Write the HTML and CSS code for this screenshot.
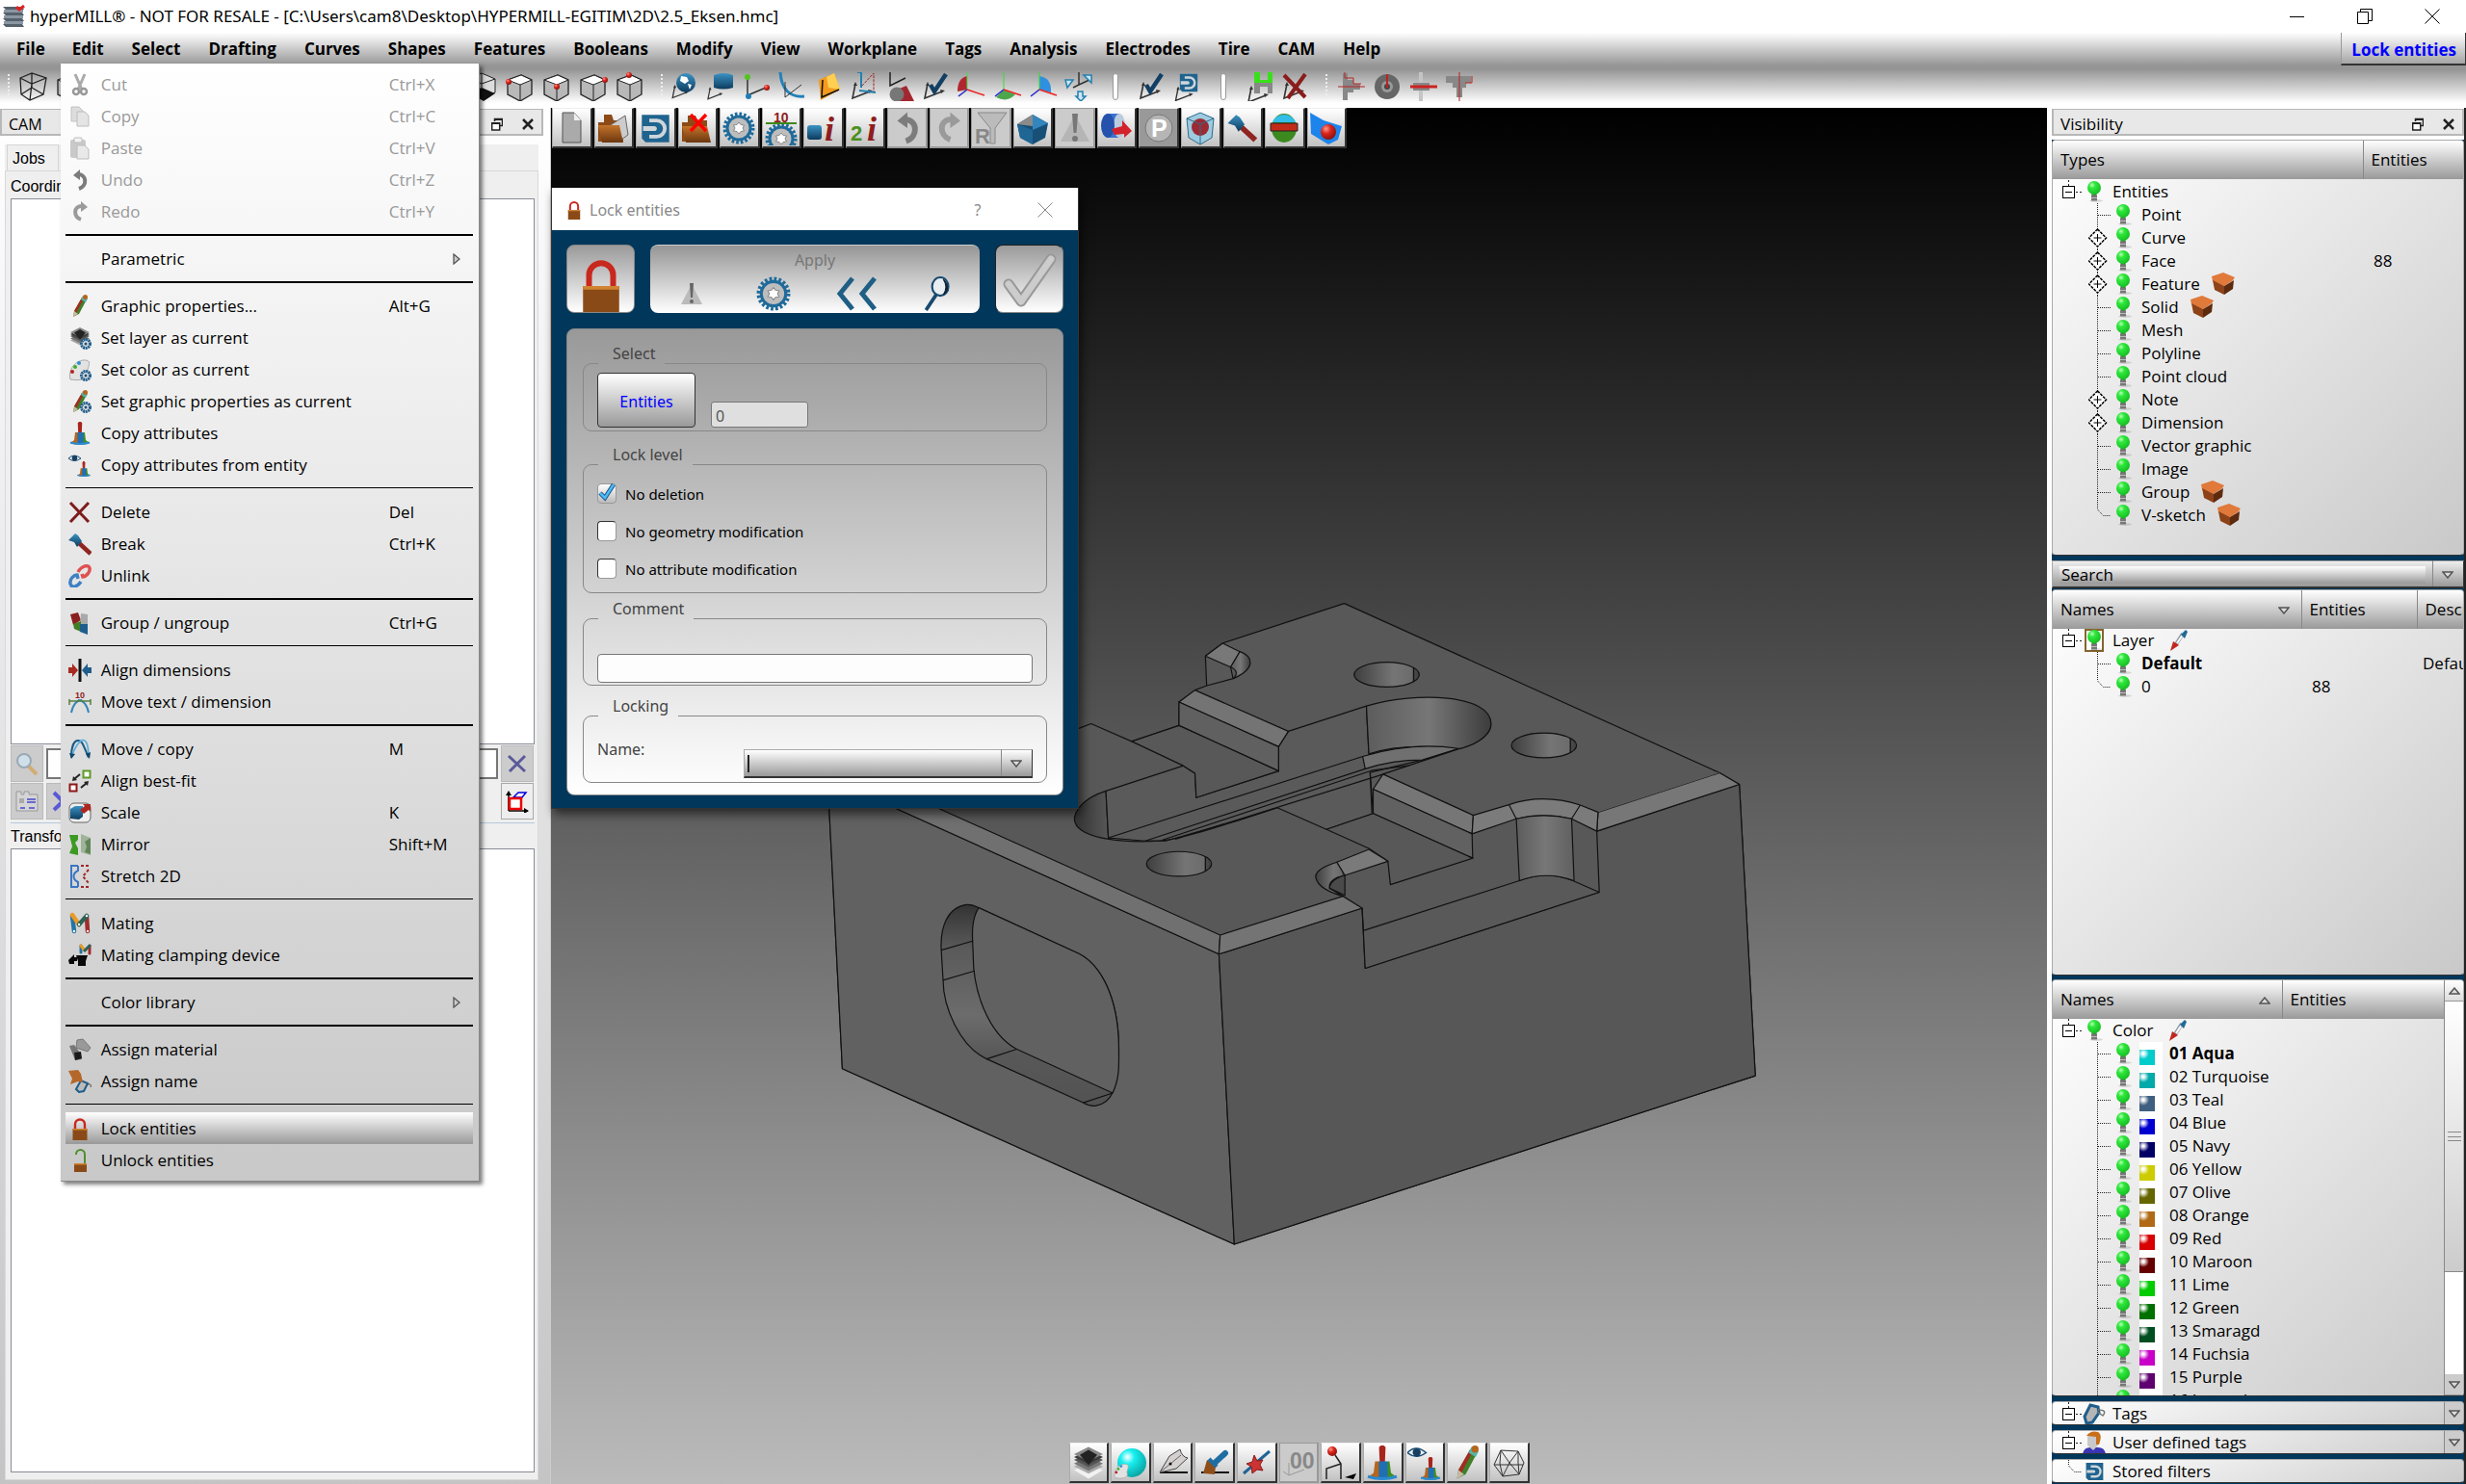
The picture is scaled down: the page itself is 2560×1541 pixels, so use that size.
FILE: index.html
```html
<!DOCTYPE html>
<html lang="en">
<head>
<meta charset="utf-8">
<title>hyperMILL</title>
<link rel="stylesheet" href="styles.css">
</head>
<body>
<svg class="defs" aria-hidden="true">
  <defs>
    <linearGradient id="g-blue" x1="0" y1="0" x2="0" y2="1"><stop offset="0" stop-color="#3a93c4"/><stop offset="1" stop-color="#0d3a5c"/></linearGradient>
    <linearGradient id="g-brown" x1="0" y1="0" x2="0" y2="1"><stop offset="0" stop-color="#c4742a"/><stop offset="1" stop-color="#6b370f"/></linearGradient>
    <linearGradient id="g-rgb" x1="0" y1="0" x2="1" y2="0"><stop offset="0.1" stop-color="#b5651d"/><stop offset="0.35" stop-color="#b5651d"/><stop offset="0.4" stop-color="#1f6fb2"/><stop offset="0.65" stop-color="#1f6fb2"/><stop offset="0.72" stop-color="#3f8f1f"/><stop offset="1" stop-color="#3f8f1f"/></linearGradient>
    <radialGradient id="g-bulb" cx="0.35" cy="0.3" r="0.8"><stop offset="0" stop-color="#b8ffb8"/><stop offset="0.3" stop-color="#2fe83c"/><stop offset="1" stop-color="#12b81f"/></radialGradient>
    <radialGradient id="g-red" cx="0.35" cy="0.3" r="0.8"><stop offset="0" stop-color="#ff9a8a"/><stop offset="0.4" stop-color="#d9251c"/><stop offset="1" stop-color="#7d0f0a"/></radialGradient>
    <radialGradient id="g-aqua" cx="0.35" cy="0.3" r="0.8"><stop offset="0" stop-color="#fff"/><stop offset="0.3" stop-color="#18f0f0"/><stop offset="1" stop-color="#089a9a"/></radialGradient>
    <linearGradient id="g-wall" x1="0" y1="0" x2="1" y2="0"><stop offset="0" stop-color="#5c5c5c"/><stop offset="0.5" stop-color="#777"/><stop offset="1" stop-color="#3c3c3c"/></linearGradient>
    <linearGradient id="g-fillet" x1="0" y1="0" x2="1" y2="0"><stop offset="0" stop-color="#5c5c5c"/><stop offset="0.5" stop-color="#777"/><stop offset="1" stop-color="#606060"/></linearGradient>
    <linearGradient id="g-slot" x1="0" y1="0" x2="1" y2="0"><stop offset="0" stop-color="#333"/><stop offset="0.45" stop-color="#5c5c5c"/><stop offset="1" stop-color="#666"/></linearGradient>
    <linearGradient id="g-hole" x1="0" y1="0" x2="1" y2="0"><stop offset="0" stop-color="#3e3e3e"/><stop offset="0.6" stop-color="#757575"/><stop offset="0.88" stop-color="#6c6c6c"/><stop offset="0.92" stop-color="#4a4a4a"/><stop offset="1" stop-color="#404040"/></linearGradient>
    <linearGradient id="g-pocket" x1="0" y1="0" x2="0" y2="1"><stop offset="0" stop-color="#333"/><stop offset="0.22" stop-color="#5a5a5a"/><stop offset="0.55" stop-color="#6c6c6c"/><stop offset="0.75" stop-color="#585858"/><stop offset="1" stop-color="#525252"/></linearGradient>
  </defs>

  <symbol id="lock" viewBox="0 0 24 24"><path d="M7 13V7.500a5 5 0 0 1 10 0V13" fill="none" stroke="#c8281e" stroke-width="2.400"/><rect x="4.500" y="12" width="15" height="12" fill="#8a4a17"/><path d="M4.500 12h15v1.500h-15z" fill="#d08432"/></symbol>
  <symbol id="unlock" viewBox="0 0 24 24"><path d="M8 6V5.500a4.500 4.500 0 0 1 9 0V15" fill="none" stroke="#4f8f2c" stroke-width="2"/><rect x="6" y="15" width="13" height="9" fill="#8a4a17"/><path d="M6 15h13v1.500H6z" fill="#d08432"/></symbol>
  <symbol id="cut" viewBox="0 0 24 24"><path d="M7 1l7 16M17 1l-7 16" stroke="#aaa" stroke-width="3"/><circle cx="8" cy="19" r="3" fill="none" stroke="#999" stroke-width="2.500"/><circle cx="16" cy="19" r="3" fill="none" stroke="#999" stroke-width="2.500"/></symbol>
  <symbol id="copy" viewBox="0 0 24 24"><path d="M3 2h8l4 4v11H3z" fill="#ddd" stroke="#c2c2c2"/><path d="M9 7h8l4 4v11H9z" fill="#e4e4e4" stroke="#bcbcbc"/></symbol>
  <symbol id="paste" viewBox="0 0 24 24"><rect x="2" y="3" width="16" height="19" rx="2" fill="#c9c9c9"/><rect x="6" y="1" width="8" height="5" rx="1" fill="#f2f2f2" stroke="#bbb"/><path d="M9 9h8l4 4v10H9z" fill="#e9e9e9" stroke="#bbb"/></symbol>
  <symbol id="undo" viewBox="0 0 24 24"><path d="M10 6c9 0 10 12 1 15" fill="none" stroke="#7c7c7c" stroke-width="4"/><path d="M12 1v11L5 7z" fill="#7c7c7c"/></symbol>
  <symbol id="redo" viewBox="0 0 24 24"><path d="M14 6c-9 0-9 11-1 14" fill="none" stroke="#9a9a9a" stroke-width="4"/><path d="M13 1v11l7-5z" fill="#9a9a9a"/></symbol>
  <symbol id="pencil" viewBox="0 0 24 24"><path d="M5 23l1-6L14 3l5 2-8 15z" fill="#3f7f2a"/><path d="M6 17L14 3l2 1-8 15z" fill="#a52a20"/><path d="M13 5l2-4 5 3-2 4z" fill="#53b5a8"/><circle cx="17.500" cy="2.500" r="2.500" fill="#b5651d"/><path d="M5 23l1-6 4 3z" fill="#c9b9a5"/></symbol>
  <symbol id="minigear" viewBox="0 0 24 24"><circle cx="18" cy="18" r="4.500" fill="#ddd" stroke="#1f5e8c" stroke-width="3" stroke-dasharray="2 .6"/><circle cx="18" cy="18" r="1.500" fill="#1f4d75"/></symbol>
  <symbol id="layers" viewBox="0 0 24 24"><path d="M12 13l10 4-10 6-10-6z" fill="#f2f2f2"/><path d="M12 9.500l10 5-10 5-10-5z" fill="#aaa"/><path d="M12 7.500l10 5-10 5-10-5z" fill="#777"/><path d="M12 5l10 5-10 5-10-5z" fill="#555"/><path d="M12 3l10 5-10 5L2 8z" fill="#3c3c3c"/><path d="M12 1l10 5-10 5L2 6z" fill="#888"/><path d="M12 3l6 3.500-6 7-6-7z" fill="#222"/></symbol>
  <symbol id="palette" viewBox="0 0 24 24"><path d="M2 22C-1 12 8 1 18 2c8 1 0 9 2 14s-6 8-18 6z" fill="#e2e2e2" stroke="#aaa"/><circle cx="7" cy="9" r="2" fill="#3faf2a"/><circle cx="11" cy="5" r="2" fill="#2f8fd0"/><circle cx="4" cy="14" r="2" fill="#b52020"/></symbol>
  <symbol id="brush" viewBox="0 0 24 24"><path d="M10.500 1.500q1.500-2 3 0l-.5 11h-2z" fill="#a8241c" stroke="#a8241c" stroke-width="1.500"/><path d="M7 11h10l1 8 4 3c-4 2-16 2-20 0l4-3z" fill="url(#g-rgb)"/><path d="M2 21.500q10 3 20 0" stroke="#2b8ad0" stroke-width="2" fill="none"/></symbol>
  <symbol id="eye" viewBox="0 0 24 24"><path d="M0 5q6-6 13 0-7 5-13 0z" fill="#e8f0f5" stroke="#1d4f75"/><circle cx="6.500" cy="4.800" r="2.800" fill="#173f61"/></symbol>
  <symbol id="cross" viewBox="0 0 24 24"><path d="M2 2l19 20M21 2L2 22" stroke="#7e1c1c" stroke-width="3"/></symbol>
  <symbol id="hammer" viewBox="0 0 24 24"><path d="M10 10l13 12" stroke="#8f2420" stroke-width="4.500"/><path d="M0 8l7-7 3 2 4 6-5 6-3-5z" fill="url(#g-blue)"/></symbol>
  <symbol id="unlink" viewBox="0 0 24 24"><g fill="none" stroke-width="3.500"><path d="M10 8C14 1 21 0 22 4s-4 9-7 9l-1-3" stroke="#e05050"/><path d="M13 18C9 24 3 25 2 20s4-9 7-9l1 4" stroke="#3f80c5"/></g></symbol>
  <symbol id="group" viewBox="0 0 24 24"><path d="M2 3l8-2 3 8-8 5z" fill="#8a1f1f"/><path d="M13 2l7 1v10h-8z" fill="#a9a9a9"/><path d="M5 13l8-3v11l-7-3z" fill="#417f25"/><path d="M12 13h8v11l-8-3z" fill="#1f5e8c"/></symbol>
  <symbol id="aligndim" viewBox="0 0 24 24"><path d="M12 0v24" stroke="#111" stroke-width="3"/><path d="M0 9h4V5l6 7-6 7v-4H0z" fill="#a82a20"/><path d="M24 9h-4V5l-6 7 6 7v-4h4z" fill="#1f5e8c"/></symbol>
  <symbol id="move" viewBox="0 0 24 24"><path d="M3 21C3 9 6 3 10 3s5 3 11 18" fill="none" stroke="#1d5a85" stroke-width="2"/><path d="M3 21C7 8 14-1 18 4c3 4 3 10 3 17" fill="none" stroke="#5bb0dc" stroke-width="1.800"/><path d="M1 16l2 6 4-5zM18 17l4 5 1-7z" fill="#134467"/></symbol>
  <symbol id="movetext" viewBox="0 0 24 24"><path d="M3 23C5 14 9 10 14 10M21 23c-2-9-6-13-11-13" fill="none" stroke="#3585b5" stroke-width="2"/><path d="M1 11h22M1 9v6M23 9v6" stroke="#56803f" stroke-width="1.500"/><text x="7" y="8" class="ico-t ico-red" font-size="9">10</text></symbol>
  <symbol id="bestfit" viewBox="0 0 24 24"><rect x="15.500" y="1.500" width="7" height="7" fill="#fff" stroke="#5d9a2a" stroke-width="2"/><rect x="1.500" y="15.500" width="7" height="7" fill="#fff" stroke="#8d1717" stroke-width="2"/><path d="M12 5l-6 5M13 19l6-5" stroke="#222" stroke-width="2"/><path d="M4 12l1-5 4 4zM21 12l-1 5-4-4z" fill="#222"/></symbol>
  <symbol id="scale" viewBox="0 0 24 24"><rect x="1" y="2" width="22" height="20" rx="5" fill="#eee" stroke="#666"/><path d="M2 8l5-3h8v11l-4 3-9-1z" fill="url(#g-blue)"/><path d="M12 9l5-4-2-2h8v8l-2-2-5 4z" fill="#ad2720"/></symbol>
  <symbol id="mirror" viewBox="0 0 24 24"><path d="M1 2h9v5l-3 3 3 6v7l-9-2 3-7z" fill="#3c9a22"/><path d="M13 1l10 4v18l-10-3z" fill="#9fb39a"/><path d="M23 5l-6 4 2 5-2 6 6 2z" fill="#5f8557"/></symbol>
  <symbol id="stretch" viewBox="0 0 24 24"><path d="M10 1H3v22h7M10 1v5C4 9 4 15 10 18v5" fill="none" stroke="#3a76c4" stroke-width="2"/><path d="M13 1h8M21 5l-6 7 6 7M13 23h8" fill="none" stroke="#a02525" stroke-width="2" stroke-dasharray="3 2"/></symbol>
  <symbol id="mating" viewBox="0 0 24 24"><g stroke-width="4.500" stroke-linecap="round"><path d="M4 4l2 16" stroke="#2274a5"/><path d="M19 5l1 15" stroke="#a02c2c"/><path d="M4 3l7 10" stroke="#eb9a25"/><path d="M11 13l8-9" stroke="#2c6259"/></g><g fill="#fff"><circle cx="6" cy="20" r="1.200"/><circle cx="20" cy="20" r="1.200"/><circle cx="11" cy="13" r="1.200"/><circle cx="19" cy="4" r="1.200"/></g></symbol>
  <symbol id="clamp" viewBox="0 0 24 24"><g stroke-width="3" stroke-linecap="round"><path d="M13 2v7" stroke="#2274a5"/><path d="M22 2v8" stroke="#a02c2c"/><path d="M13 2l4 5" stroke="#eb9a25"/><path d="M17 7l5-5" stroke="#2c6259"/></g><path d="M8 12h12l-2 6v5H10v-5zM0 17l6-6v3h3v4H6v3H1z" fill="#0a0a0a"/></symbol>
  <symbol id="material" viewBox="0 0 24 24"><path d="M9 2l6-1 8 9-3 4-12-4z" fill="#999" stroke="#777"/><path d="M1 8l5-1 6 8 2 7-7 1z" fill="#777"/><path d="M6 15l7-1 1 7-7 2z" fill="#1b1b1b"/></symbol>
  <symbol id="name" viewBox="0 0 24 24"><path d="M8 20l5-9 7 3-4 8-5 1z" fill="#bbb" stroke="#1f5e8c" stroke-width="2"/><path d="M19 15q6-1 4 3" fill="none" stroke="#444"/><path d="M0 1l10-1 3 4 2 9-5-1-8 3 2-6z" fill="#b5672a"/></symbol>

  <symbol id="bulb" viewBox="0 0 20 24"><ellipse cx="12" cy="21.500" rx="7" ry="1.500" fill="#000" opacity=".12"/><rect x="7.500" y="13" width="5" height="3" fill="#28912e"/><rect x="7" y="15.500" width="6" height="6" fill="#777"/><rect x="7" y="18" width="6" height="1" fill="#bbb"/><circle cx="10" cy="8" r="7" fill="url(#g-bulb)"/></symbol>
  <symbol id="crate" viewBox="0 0 24 24"><path d="M0 4L12 0l12 5-2 3-9 6L1 9z" fill="#e0793a"/><path d="M1 8l12 6v9L3 18z" fill="#8d4218"/><path d="M13 14l10-6-1 9-9 6z" fill="#5d2a0e"/></symbol>
  <symbol id="picker" viewBox="0 0 20 24"><path d="M7 16l7-11" stroke="#8e9aa3" stroke-width="4"/><path d="M8 15l6-9" stroke="#fff" stroke-width="2"/><path d="M12 6l5-5 2 2-3 7z" fill="#1f6a96"/><path d="M1 23l3-10 6 4z" fill="#c0281e"/></symbol>
  <symbol id="t-root" viewBox="0 0 20 24"><path d="M6.500 0v6M14 12.500h6" stroke="#222" stroke-dasharray="2 2"/><rect x=".5" y="6.500" width="12" height="12" fill="#fff" stroke="#000"/><path d="M3 12.500h7" stroke="#000"/></symbol>
  <symbol id="t-mid" viewBox="0 0 26 24"><path d="M9.500 0v24M10 12.500h13" stroke="#222" stroke-dasharray="1 1" fill="none"/></symbol>
  <symbol id="t-plus" viewBox="0 0 26 24"><path d="M9.500 0v3M9.500 21v3" stroke="#222" stroke-dasharray="1 1"/><path d="M9.500 3l9 9-9 9-9-9z" fill="#fff" stroke="#000" stroke-width="1.500" stroke-dasharray="3 1"/><path d="M9.500 8v8M5.500 12h8" stroke="#000"/></symbol>
  <symbol id="t-end" viewBox="0 0 26 24"><path d="M9.500 0v6l6 6.500H23" stroke="#222" stroke-dasharray="1 1" fill="none"/></symbol>
  <symbol id="tag" viewBox="0 0 24 24"><path d="M2 15l6-12 8 2 1 6-7 10-6 1z" fill="#b5b5b5" stroke="#1f5e8c" stroke-width="3"/><path d="M16 8q10 0 5 6l-6-4" fill="none" stroke="#777" stroke-width="1.500"/></symbol>
  <symbol id="user" viewBox="0 0 24 24"><path d="M0 24q1-7 8-7h8q7 0 8 7z" fill="#3a35b5"/><path d="M5 6q5-4 11 0v9l-5 5-6-5z" fill="#c9c9c9"/><path d="M4 5q4-6 12-4 5 3 1 13h-3V6z" fill="#c96f1a"/></symbol>
  <symbol id="disk" viewBox="0 0 24 24"><path d="M1 1h22v22H4l-3-3z" fill="#1f638f"/><path d="M7 4h6a8 8 0 0 1 0 16H7v-3h6a5 5 0 0 0 0-10H7z" fill="#cfd6da"/><path d="M2 10h9a2 2 0 0 1 0 4H2z" fill="#cfd6da"/></symbol>
  <symbol id="arr-d" viewBox="0 0 12 8"><path d="M1 1h10L6 7z" fill="#ddd" stroke="#555" stroke-width="1.500"/></symbol>
  <symbol id="arr-u" viewBox="0 0 12 8"><path d="M1 7h10L6 1z" fill="#ddd" stroke="#555" stroke-width="1.500"/></symbol>
  <symbol id="arr-r" viewBox="0 0 8 12"><path d="M1 1v10l6-5z" fill="#ccc" stroke="#555" stroke-width="1.300"/></symbol>
  <symbol id="float" viewBox="0 0 12 14"><path d="M3.500 4V1.500h8v7H9" fill="none" stroke="#222" stroke-width="1.500"/><path d="M3 2h9" stroke="#222" stroke-width="2"/><rect x=".7" y="6" width="8" height="7" fill="#fff" stroke="#222" stroke-width="1.500"/><path d="M0 6h9" stroke="#222" stroke-width="2"/></symbol>
  <symbol id="close" viewBox="0 0 12 14"><path d="M1 2l10 10M11 2L1 12" stroke="#222" stroke-width="2.500"/></symbol>

  <symbol id="wire" viewBox="0 0 30 30"><path d="M1 6l12-5 15 5-3 17-14 6-9-6zM1 6l12 6 15-6M13 12l-2 17M13 1v15M13 16l12 7M13 16L2 23" fill="none" stroke="#222" stroke-width="1.300"/></symbol>
  <symbol id="wireblack" viewBox="0 0 30 30"><path d="M1 6l12-5 14 6v14l-12 8-14-7z" fill="#ddd" stroke="#222"/><path d="M1 21l12-5 14 6-12 8z" fill="#111"/><path d="M13 1v15M1 6l12 6 14-5" fill="none" stroke="#222"/></symbol>
  <symbol id="box" viewBox="0 0 30 30"><path d="M2 8l14-5 11 5v15l-12 7-13-7z" fill="#b8b8b8" stroke="#222" stroke-width="1.300"/><path d="M2 8l14-5 11 5-12 5z" fill="#fff" stroke="#222"/><path d="M15 13v17" stroke="#222"/></symbol>
  <symbol id="axes" viewBox="0 0 30 30"><path d="M7 12L4 27l18-7" fill="none" stroke="#333" stroke-width="1.600"/><path d="M5 14l2-4 2 4zM20 18l5 1-4 3z" fill="#333"/></symbol>
  <symbol id="check" viewBox="0 0 30 30"><path d="M10 13l4 7L26 2" fill="none" stroke="#123f63" stroke-width="4.500"/></symbol>

  <symbol id="gear" viewBox="0 0 34 34"><circle cx="17" cy="17" r="14" fill="none" stroke="#1f6a9a" stroke-width="5" stroke-dasharray="2.500 1.900"/><circle cx="17" cy="17" r="13.500" fill="#1f6a9a"/><circle cx="17" cy="17" r="10.500" fill="#bdbdbd"/><path d="M17 11l2 2.500 3.500.5-1.500 3 1.500 3-3.500.5-2 2.500-2-2.500-3.500-.5 1.500-3-1.500-3 3.500-.5z" fill="#fff" stroke="#888"/></symbol>
</svg>

<header class="titlebar">
  <svg class="app-icon" viewBox="0 0 24 24"><g fill="#55616b"><path d="M1 2h20l2 3H4zM1 8h20l2 3H4zM1 14h20l2 3H4zM1 20h20l2 3H4z"/></g><g fill="#8b98a3"><path d="M2 5h20v3H2zM2 11h20v3H2zM2 17h20v3H2z"/></g><path d="M15 2l3 3 5-4" stroke="#d22" stroke-width="3" fill="none"/></svg>
  <h1>hyperMILL® - NOT FOR RESALE - [C:\Users\cam8\Desktop\HYPERMILL-EGITIM\2D\2.5_Eksen.hmc]</h1>
  <div class="win-buttons">
    <button aria-label="Minimize"><svg viewBox="0 0 16 16"><path d="M0 8.500h15" stroke="#000"/></svg></button>
    <button aria-label="Restore"><svg viewBox="0 0 16 16"><path d="M.5 3.500h11v12H.5zM3.500 3V.5h12v12H12" fill="none" stroke="#000"/></svg></button>
    <button aria-label="Close"><svg viewBox="0 0 16 16"><path d="M.5.5l15 15M15.500.5l-15 15" stroke="#000"/></svg></button>
  </div>
</header>

<div class="bars">
<nav class="menubar">
  <button>File</button>
  <div class="menu-anchor">
    <button>Edit</button>
    <div class="menu">
      <button class="mi off"><svg><use href="#cut"/></svg><span>Cut</span><kbd>Ctrl+X</kbd></button>
      <button class="mi off"><svg><use href="#copy"/></svg><span>Copy</span><kbd>Ctrl+C</kbd></button>
      <button class="mi off"><svg><use href="#paste"/></svg><span>Paste</span><kbd>Ctrl+V</kbd></button>
      <button class="mi off"><svg><use href="#undo"/></svg><span>Undo</span><kbd>Ctrl+Z</kbd></button>
      <button class="mi off"><svg><use href="#redo"/></svg><span>Redo</span><kbd>Ctrl+Y</kbd></button>
      <hr>
      <button class="mi"><svg></svg><span>Parametric</span><kbd></kbd><svg class="more"><use href="#arr-r"/></svg></button>
      <hr>
      <button class="mi"><svg><use href="#pencil"/></svg><span>Graphic properties...</span><kbd>Alt+G</kbd></button>
      <button class="mi"><svg><use href="#layers"/><use href="#minigear"/></svg><span>Set layer as current</span></button>
      <button class="mi"><svg><use href="#palette"/><use href="#minigear"/></svg><span>Set color as current</span></button>
      <button class="mi"><svg><use href="#pencil"/><use href="#minigear"/></svg><span>Set graphic properties as current</span></button>
      <button class="mi"><svg><use href="#brush"/></svg><span>Copy attributes</span></button>
      <button class="mi"><svg><use href="#eye"/><use href="#brush" x="8" y="8" width="16" height="16"/></svg><span>Copy attributes from entity</span></button>
      <hr class="thin">
      <button class="mi"><svg><use href="#cross"/></svg><span>Delete</span><kbd>Del</kbd></button>
      <button class="mi"><svg><use href="#hammer"/></svg><span>Break</span><kbd>Ctrl+K</kbd></button>
      <button class="mi"><svg><use href="#unlink"/></svg><span>Unlink</span></button>
      <hr>
      <button class="mi"><svg><use href="#group"/></svg><span>Group / ungroup</span><kbd>Ctrl+G</kbd></button>
      <hr class="thin">
      <button class="mi"><svg><use href="#aligndim"/></svg><span>Align dimensions</span></button>
      <button class="mi"><svg><use href="#movetext"/></svg><span>Move text / dimension</span></button>
      <hr>
      <button class="mi"><svg><use href="#move"/></svg><span>Move / copy</span><kbd>M</kbd></button>
      <button class="mi"><svg><use href="#bestfit"/></svg><span>Align best-fit</span></button>
      <button class="mi"><svg><use href="#scale"/></svg><span>Scale</span><kbd>K</kbd></button>
      <button class="mi"><svg><use href="#mirror"/></svg><span>Mirror</span><kbd>Shift+M</kbd></button>
      <button class="mi"><svg><use href="#stretch"/></svg><span>Stretch 2D</span></button>
      <hr class="thin">
      <button class="mi"><svg><use href="#mating"/></svg><span>Mating</span></button>
      <button class="mi"><svg><use href="#clamp"/></svg><span>Mating clamping device</span></button>
      <hr>
      <button class="mi"><svg></svg><span>Color library</span><kbd></kbd><svg class="more"><use href="#arr-r"/></svg></button>
      <hr>
      <button class="mi"><svg><use href="#material"/></svg><span>Assign material</span></button>
      <button class="mi"><svg><use href="#name"/></svg><span>Assign name</span></button>
      <hr class="thin">
      <button class="mi hot"><svg><use href="#lock"/></svg><span>Lock entities</span></button>
      <button class="mi"><svg><use href="#unlock"/></svg><span>Unlock entities</span></button>
    </div>
  </div>
  <button>Select</button><button>Drafting</button><button>Curves</button><button>Shapes</button><button>Features</button><button>Booleans</button><button>Modify</button><button>View</button><button>Workplane</button><button>Tags</button><button>Analysis</button><button>Electrodes</button><button>Tire</button><button>CAM</button><button>Help</button>
  <button class="recent">Lock entities</button>
</nav>

<div class="toolbar">
  <i class="grip"></i>
  <div class="tg views">
    <button aria-label="Wireframe"><svg viewBox="0 0 30 30"><use href="#wire"/></svg></button>
    <button aria-label="Shaded"><svg viewBox="0 0 30 30"><use href="#box"/></svg></button>
    <button class="push" aria-label="Bottom view"><svg viewBox="0 0 30 30"><use href="#wireblack"/></svg></button>
    <button aria-label="View 1"><svg viewBox="0 0 30 30"><use href="#box"/><circle cx="3" cy="10" r="3" fill="url(#g-red)"/></svg></button>
    <button aria-label="View 2"><svg viewBox="0 0 30 30"><use href="#box"/><circle cx="15" cy="15" r="3" fill="url(#g-red)"/></svg></button>
    <button aria-label="View 3"><svg viewBox="0 0 30 30"><use href="#box"/><circle cx="27" cy="8" r="3" fill="url(#g-red)"/></svg></button>
    <button aria-label="View 4"><svg viewBox="0 0 30 30"><use href="#box"/><circle cx="14" cy="3" r="3" fill="url(#g-red)"/></svg></button>
  </div>
  <i class="grip"></i>
  <div class="tg planes">
    <button aria-label="World"><svg viewBox="0 0 30 30"><use href="#axes" y="4" width="24" height="26"/><circle cx="17" cy="11" r="10" fill="url(#g-blue)"/><path d="M12 4l6 1 2 4-4 3-5-3zM19 12l4 1-2 5z" fill="#fff"/></svg></button>
    <button aria-label="Screen"><svg viewBox="0 0 30 30"><use href="#axes" y="8" width="22" height="22"/><path d="M9 3q10-4 20 0v13q-10 3-20 0z" fill="url(#g-blue)"/></svg></button>
    <button aria-label="Points"><svg viewBox="0 0 30 30"><path d="M7 6v18l19-8" fill="none" stroke="#333" stroke-width="1.500"/><circle cx="7" cy="5" r="3" fill="#4fc51e"/><circle cx="8" cy="25" r="3" fill="#1f7fb5"/><circle cx="27" cy="16" r="3" fill="url(#g-red)"/></svg></button>
    <button aria-label="Curve"><svg viewBox="0 0 30 30"><path d="M3 0q2 27 25 25" fill="none" stroke="#2481b8" stroke-width="3"/><path d="M8 10v16l17-13" fill="none" stroke="#333"/></svg></button>
    <button aria-label="Plane"><svg viewBox="0 0 30 30"><path d="M6 8l16-7 6 17-20 11z" fill="#f49a1c"/><path d="M14 5l8-4 6 17-12-2z" fill="#ffcf52"/><path d="M10 8l-1 18 18-8" fill="none" stroke="#111" stroke-width="1.500"/></svg></button>
    <button aria-label="Sketch"><svg viewBox="0 0 30 30"><use href="#axes"/><path d="M9 0h4v16M11 19l17 2" fill="none" stroke="#2380b0" stroke-width="2"/><path d="M14 14L26 1v19" fill="none" stroke="#a22" stroke-dasharray="3 1"/></svg></button>
    <button aria-label="Cone"><svg viewBox="0 0 30 30"><path d="M12 18l10-4 8 16H14z" fill="#a22730"/><circle cx="12" cy="23" r="7.500" fill="#777"/><path d="M5 0v14l16-8" fill="none" stroke="#222" stroke-width="1.500"/></svg></button>
    <button aria-label="Set"><svg viewBox="0 0 30 30"><use href="#axes"/><use href="#check"/></svg></button>
    <button aria-label="X plane"><svg viewBox="0 0 30 30"><path d="M1 20q0-14 10-16v14z" fill="#b02630"/><path d="M11 0v18" stroke="#4d4"/><path d="M11 18l-9 7" stroke="#22c" stroke-width="1.500"/><path d="M11 18l18 6" stroke="#e22" stroke-width="1.500"/></svg></button>
    <button aria-label="Y plane"><svg viewBox="0 0 30 30"><path d="M3 26q12 6 20-3l-12-5z" fill="#4ca64c"/><path d="M11 0v18" stroke="#3d3"/><path d="M11 18l-9 7" stroke="#22c" stroke-width="1.500"/><path d="M11 18l18 6" stroke="#e22" stroke-width="1.500"/></svg></button>
    <button aria-label="Z plane"><svg viewBox="0 0 30 30"><path d="M11 4q13 2 12 17l-12-3z" fill="#2f90e0"/><path d="M11 0v18" stroke="#3d3"/><path d="M11 18l-9 7" stroke="#22c" stroke-width="1.500"/><path d="M11 18l18 6" stroke="#e22" stroke-width="1.500"/></svg></button>
    <button aria-label="Align"><svg viewBox="0 0 30 30"><path d="M15 0v13l13-6M15 13l-6 3" fill="none" stroke="#333" stroke-width="1.500"/><path d="M1 8h8l-6 8zM20 3h8v8zM14 20h5v5h3l-5 5-5-5h2z" fill="#cfe6f3" stroke="#2380b0" stroke-width="1.500"/></svg></button>
    <i class="bar"></i>
    <button aria-label="Save plane"><svg viewBox="0 0 30 30"><use href="#axes"/><use href="#check"/></svg></button>
    <button aria-label="Load plane"><svg viewBox="0 0 30 30"><use href="#axes" y="6" width="26" height="26"/><use href="#disk" x="6" y="1" width="22" height="20"/></svg></button>
    <i class="bar"></i>
    <button aria-label="H"><svg viewBox="0 0 30 30"><use href="#axes" y="4"/><path d="M10 0h6v8h8V0h5v11H10z" fill="#39e01a"/><path d="M10 11h19v11h-5v-7h-8v7h-6z" fill="#888"/></svg></button>
    <button aria-label="Delete plane"><svg viewBox="0 0 30 30"><use href="#axes"/><path d="M4 3l22 23M26 2L8 27" stroke="#8a1c1c" stroke-width="4"/></svg></button>
  </div>
  <i class="grip"></i>
  <div class="tg turning">
    <button aria-label="Turning 1"><svg viewBox="0 0 30 30"><path d="M6 1h5v28H6zM11 8h6v13h-6zM17 12h7v6h-7z" fill="#888"/><path d="M1 15h28M8 0v6h9v6h8" fill="none" stroke="#b22"/></svg></button>
    <button aria-label="Turning 2"><svg viewBox="0 0 30 30"><circle cx="15" cy="15" r="13" fill="#666"/><circle cx="15" cy="15" r="6" fill="#999"/><circle cx="15" cy="15" r="3" fill="#444"/><path d="M15 2v14" stroke="#b22" stroke-width="2"/></svg></button>
    <button aria-label="Turning 3"><svg viewBox="0 0 30 30"><path d="M10 0h4v30h-4z" fill="#c5c5c5"/><path d="M4 11h17v8H4z" fill="#888"/><path d="M1 15h28" stroke="#c22" stroke-width="3"/></svg></button>
    <button aria-label="Turning 4"><svg viewBox="0 0 30 30"><path d="M1 4h26v7H1zM8 11h14v5H8zM12 16h6v10h-6z" fill="#888"/><path d="M15 0v30M28 4v7h-7" fill="none" stroke="#b22"/></svg></button>
  </div>
</div>
</div>

<main class="work">
<section class="cam">
  <div class="dock-title"><h2>CAM</h2><button aria-label="Float"><svg><use href="#float"/></svg></button><button aria-label="Close"><svg><use href="#close"/></svg></button></div>
  <div class="cam-body">
    <button class="tab">Jobs</button>
    <div class="cam-page">
      <p>Coordin</p>
      <div class="list jobs"></div>
      <div class="cam-row">
        <button class="sq" aria-label="Find"><svg viewBox="0 0 24 24"><path d="M13 14l9 9" stroke="#d2ad74" stroke-width="4"/><circle cx="9" cy="9" r="7" fill="#cfe0ea" stroke="#9aa9b5" stroke-width="2"/></svg></button>
        <input type="text" aria-label="Filter">
        <button class="sq" aria-label="Clear"><svg viewBox="0 0 24 24"><path d="M3 4l17 16M20 4L4 20" stroke="#5a5a9a" stroke-width="3"/></svg></button>
      </div>
      <div class="cam-row">
        <button class="sq" aria-label="Details"><svg viewBox="0 0 24 24"><path d="M1 6V2h5v3h3V2h5v3h9v17H1z" fill="#d5d5d5" stroke="#999"/><path d="M12 10h9M12 13h9M5 19h5M14 19h6" stroke="#6a6ad0" stroke-width="2"/><path d="M4 9h5v5H4z" fill="#aaa"/></svg></button>
        <button class="sq" aria-label="Remove"><svg viewBox="0 0 24 24"><path d="M3 3l18 18M21 4L3 21" stroke="#5a5ad8" stroke-width="4"/></svg></button>
        <button class="sq end" aria-label="Frame"><svg viewBox="0 0 24 24"><path d="M3 22V4M3 22h20" stroke="#000" stroke-width="1.500"/><path d="M3 1l3 5H0zM24 22l-5-3v6z"/><path d="M8 8l5-5h8l-4 5z" fill="#fff" stroke="#00d" stroke-width="1.500"/><rect x="4" y="9" width="12" height="11" fill="#fff" stroke="#e00" stroke-width="2.500"/></svg></button>
      </div>
      <hr>
      <p>Transfo</p>
      <div class="list rest"></div>
    </div>
  </div>
</section>

<section class="view">
  <svg class="model" viewBox="572 112 1553 1429" preserveAspectRatio="xMidYMid slice">
    <g transform="translate(840 600) scale(.6378 .4592)" stroke="#111" stroke-width="1.200" stroke-linejoin="round" fill="none">
      <path class="ln" fill="#585858" d="M30 452L100 400 438 341 459 330 525 370 602 334 602 281 628 254 647 244 645 177 673 148 871 58 1482 441 1514 467 1540 1126 692 1507 54 1110z"/>
      <path class="ln" fill="#616161" d="M30 452L667 851 692 1507 54 1110z"/>
      <path class="ln" fill="#575757" d="M667 851L900 747 905 883 1286 711 1282 573 1514 467 1540 1126 692 1507z"/>
      <path class="ln" fill="#707070" d="M30 452L667 851 669 808 95 449z"/>
      <path class="ln" fill="#747474" d="M667 851L669 808 869 720 900 747z"/>
      <path class="ln" fill="#777" d="M1282 573L1284 530 1482 441 1514 467z"/>
      <path class="ln" fill="#595959" d="M900 747L902 798 905 883 1286 711 1243 685Q1200 660 1156 685L902 798"/>
      <path class="ln" fill="url(#g-slot)" d="M483 482C440 500 425 540 435 560 450 590 510 600 570 595L487 588z"/>
      <path class="ln" fill="#5a5a5a" d="M609 425L483 482 487 588 547 595 580 595 700 548 762 520 842 569 918 533 913 440 998 412 1055 388 911 398 907 290 780 347 764 382 764 437 630 497 628 442z"/>
      <path class="ln" fill="url(#g-wall)" d="M907 290C990 255 1110 265 1110 330 1110 360 1080 380 1055 388Q970 372 911 398z"/>
      <path class="ln" fill="#707070" d="M901 404Q980 370 1057 386L998 412Q950 412 905 432z"/>
      <path class="ln" d="M487 588L901 404M547 595L905 432M575 593L915 436 980 424M596 591L935 444M913 440L916 533M570 595C600 592 640 575 762 520"/>
      <path class="ln" fill="#585858" d="M1055 388L934 444 1081 537 1139 513 1284 530 1482 441 1110 330C1110 360 1080 380 1055 388z" stroke="none"/>
      <path class="ln" d="M1110 330C1110 360 1080 380 1055 388L934 444"/>
      <path class="ln" fill="#747474" d="M628 254L780 347 764 382 602 281z"/>
      <path class="ln" fill="#606060" d="M602 281L764 382V437L602 334z"/>
      <path class="ln" fill="#585858" d="M525 370L602 334 764 437 630 497 628 442 609 425z"/>
      <path class="ln" fill="#767676" d="M934 444L1081 537 1079 579 918 478z"/>
      <path class="ln" fill="#616161" d="M918 478L1079 579 1080 634 918 533z"/>
      <path class="ln" fill="#585858" d="M842 569L918 533 1080 634 946 694 942 641 911 612z"/>
      <path class="ln" fill="#7b7b7b" d="M1081 537L1139 513Q1195 487 1255 514L1284 530 1282 573 1241 545Q1195 530 1151 545L1079 579z"/>
      <path class="ln" d="M1139 513L1151 545M1255 514L1241 545"/>
      <path class="ln" fill="url(#g-fillet)" d="M1151 545Q1195 530 1241 545L1245 685Q1200 662 1156 685z"/>
      <path class="ln" fill="url(#g-hole)" d="M859 643Q820 660 825 680 830 705 869 720L847 702Q845 680 872 673z"/>
      <path class="ln" fill="#4a4a4a" d="M872 673V718L847 702Q848 682 872 673z"/>
      <path class="ln" fill="#7a7a7a" d="M859 643L911 614 942 641 872 673z"/>
      <path class="ln" fill="#787878" d="M645 177L673 148 701 167 686 202z"/>
      <path class="ln" fill="url(#g-wall)" d="M686 202L701 167Q718 175 718 192 717 212 690 228 702 212 686 202z"/>
      <path class="ln" d="M647 244L690 228 686 202"/>
      <g fill="url(#g-hole)">
        <ellipse class="ln" cx="940" cy="219" rx="53" ry="28"/><ellipse class="ln" cx="1196" cy="379" rx="53" ry="28"/><ellipse class="ln" cx="602" cy="647" rx="53" ry="28"/>
      </g>
      <path class="ln" d="M984 203v33M1239 363v33M645 631v33"/>
      <path class="ln" fill="url(#g-pocket)" d="M215 842C213 790 225 745 256 739Q265 738 276 746L433 846C475 870 503 950 504 1060 505 1160 490 1190 466 1194Q455 1195 446 1187L289 1088C245 1060 218 970 218 910z"/>
      <path class="ln" fill="#616161" d="M276 746C262 775 266 820 267 850 266 930 290 1030 338 1066L494 1165C506 1130 504 1100 504 1060 503 950 475 870 433 846z"/>
      <path class="ln" d="M215 842L267 821M218 910L269 889M289 1088L338 1066M446 1187L494 1165"/>
    </g>
  </svg>

  <div class="strip top">
    <button aria-label="New"><svg viewBox="0 0 36 36"><path d="M9 2h12l7 8v23H9z" fill="#aaa" stroke="#555"/><path d="M21 2v8h7z" fill="#eee"/></svg></button>
    <button aria-label="Open"><svg viewBox="0 0 36 36"><path d="M2 12h6V4h8l2 6h10v22H2z" fill="#8d4a16"/><path d="M10 18L30 5l3 20-7 5z" fill="#ccc" stroke="#666"/><path d="M2 15h22l4 18H6z" fill="url(#g-brown)"/></svg></button>
    <button aria-label="Save"><svg viewBox="0 0 36 36"><use href="#disk" x="3" y="3" width="31" height="31"/></svg></button>
    <button aria-label="Close file"><svg viewBox="0 0 36 36"><path d="M2 12h6V5h8l2 5h10v22H2z" fill="#8d4a16"/><path d="M2 16h26l4 17H6z" fill="url(#g-brown)"/><path d="M11 4l16 17M27 4L11 21" stroke="#f00" stroke-width="3.500"/></svg></button>
    <button aria-label="Settings"><svg viewBox="0 0 36 36"><use href="#gear" x="1" y="1" width="34" height="34"/></svg></button>
    <button aria-label="Dimension"><svg viewBox="0 0 36 36"><use href="#gear" x="1" y="12" width="34" height="34"/><path d="M2 13h32" stroke="#3c8a1a" stroke-width="2"/><text x="10" y="12" class="ico-t ico-red" font-size="14">10</text></svg></button>
    <button aria-label="Info"><svg viewBox="0 0 36 36"><rect x="2" y="15" width="15" height="15" rx="3" fill="url(#g-blue)"/><text x="20" y="31" class="ico-s ico-red" font-size="36">i</text></svg></button>
    <button aria-label="Info 2"><svg viewBox="0 0 36 36"><text x="3" y="31" class="ico-t ico-green" font-size="22">2</text><text x="20" y="31" class="ico-s ico-red" font-size="36">i</text></svg></button>
    <button class="dim" aria-label="Undo"><svg viewBox="0 0 24 24"><use href="#undo" width="24" height="24"/></svg></button>
    <button class="dim" aria-label="Redo"><svg viewBox="0 0 24 24"><use href="#redo" width="24" height="24"/></svg></button>
    <button class="dim" aria-label="Reset filter"><svg viewBox="0 0 36 36"><path d="M4 2h30L22 18v16h-5V18z" fill="#bbb" stroke="#888"/><text x="1" y="34" class="ico-t ico-gray" font-size="22">R</text></svg></button>
    <button aria-label="Solid"><svg viewBox="0 0 36 36"><path d="M2 14L18 4l16 9-3 15-13 7L5 28z" fill="#174f77"/><path d="M2 14L18 4v12z" fill="#8b8b8b"/><path d="M18 4l16 9-16 7z" fill="#3385bd"/><path d="M2 14l16 6v15L5 28z" fill="#1f6695"/></svg></button>
    <button class="dim" aria-label="Warnings"><svg viewBox="0 0 36 36"><path d="M18 4l15 28H3z" fill="#b5b5b5"/><path d="M15 3h6l-1.500 20h-3z" fill="#777"/><circle cx="18" cy="29" r="3" fill="#777"/></svg></button>
    <button aria-label="Subtract"><svg viewBox="0 0 36 36"><path d="M9 3h12v25H9z" fill="#3a72d0"/><ellipse cx="21" cy="15.500" rx="6" ry="12.500" fill="#bcd"/><ellipse cx="9" cy="15.500" rx="7" ry="12.500" fill="#2452ac"/><path d="M13 19l11-3v-6l10 11-8 7v-4l-10 1z" fill="#d3222c"/></svg></button>
    <button class="pp" aria-label="Parametric"><svg viewBox="0 0 36 36"><circle cx="18" cy="18" r="14" fill="#b5b5b5" stroke="#777"/><text x="10" y="27" class="ico-t" fill="#fff" font-size="25">P</text></svg></button>
    <button aria-label="Stock"><svg viewBox="0 0 36 36"><path d="M4 8l14-6 14 6-2 20-12 7-12-7z" fill="#9dcbe0" stroke="#2d6a8c"/><circle cx="18" cy="17" r="9" fill="#9c2a33"/><path d="M4 8l14 6 14-6M18 14v21" fill="none" stroke="#2d6a8c"/></svg></button>
    <button aria-label="Break"><svg viewBox="0 0 36 36"><use href="#hammer" x="2" y="3" width="31" height="30"/></svg></button>
    <button aria-label="Analysis"><svg viewBox="0 0 36 36"><ellipse cx="18" cy="18" rx="13" ry="15" fill="#3c8a1f"/><path d="M6 12a12.500 11 0 0 1 24 0z" fill="#34bde8"/><path d="M4 13h28v8H4z" fill="#c22a18" stroke="#222"/></svg></button>
    <button aria-label="Shape"><svg viewBox="0 0 36 36"><path d="M1 2l14 8 19 6-4 14-10 5L2 24z" fill="#1d84ec"/><circle cx="20" cy="22" r="8" fill="url(#g-red)"/></svg></button>
  </div>

  <form class="dialog">
    <div class="dlg-title"><svg><use href="#lock"/></svg><h2>Lock entities</h2><button type="button" aria-label="Help">?</button><button type="button" aria-label="Close"><svg viewBox="0 0 16 16"><path d="M.5.5l15 15M15.500.5l-15 15" stroke="#888"/></svg></button></div>
    <div class="dlg-body">
      <div class="dlg-head">
        <button type="button" class="big" aria-label="Lock"><svg viewBox="0 0 24 24"><use href="#lock"/></svg></button>
        <div class="apply">
          <span>Apply</span>
          <div>
            <button type="button" aria-label="Warnings"><svg class="sm" viewBox="0 0 24 24"><path d="M12 2l11 21H1z" fill="#bbb"/><path d="M10 1h4l-1 15h-2z" fill="#666"/><circle cx="12" cy="20" r="2" fill="#666"/></svg></button>
            <button type="button" aria-label="Options"><svg viewBox="0 0 34 34"><use href="#gear"/></svg></button>
            <button type="button" aria-label="Back"><svg class="wide" viewBox="0 0 42 36"><path d="M17 2L4 18l13 16M40 2L27 18l13 16" fill="none" stroke="#1f5e85" stroke-width="5"/></svg></button>
            <button type="button" aria-label="Preview"><svg viewBox="0 0 34 34"><path d="M15 18L5 33" stroke="#174a70" stroke-width="3.500"/><ellipse cx="19" cy="10" rx="8" ry="9" fill="#e9eef2" stroke="#174a70" stroke-width="2"/><path d="M22 3q5 7 0 15 8-7 0-15z" fill="#123" stroke="#123"/></svg></button>
          </div>
        </div>
        <button type="button" class="big ok" aria-label="OK"><svg viewBox="0 0 70 70"><path d="M13 40l13 18L57 14" fill="none" stroke="#999" stroke-width="11" stroke-linecap="round" stroke-linejoin="round"/><path d="M13 40l13 18L57 14" fill="none" stroke="#ccc" stroke-width="7" stroke-linecap="round" stroke-linejoin="round"/></svg></button>
      </div>
      <div class="dlg-panel">
        <fieldset class="f-select"><legend><span>Select</span></legend><div class="fs"><button type="button" class="pick">Entities</button><input type="text" value="0" aria-label="Count"></div></fieldset>
        <fieldset class="f-level"><legend><span>Lock level</span></legend>
          <label><input type="checkbox" checked><svg class="tick" viewBox="0 0 20 20"><path d="M3 11l5 5L17 2" fill="none" stroke="#1c4f8c" stroke-width="4.500"/><path d="M3 11l5 5L17 2" fill="none" stroke="#4bbdf0" stroke-width="2.500"/></svg>No deletion</label>
          <label><input type="checkbox">No geometry modification</label>
          <label><input type="checkbox">No attribute modification</label>
        </fieldset>
        <fieldset class="f-comment"><legend><span>Comment</span></legend><div class="fs"><input type="text" aria-label="Comment"></div></fieldset>
        <fieldset class="f-lock"><legend><span>Locking</span></legend><div class="fs"><label for="lk">Name:</label><span class="combo"><select id="lk"><option></option></select><svg><use href="#arr-d"/></svg></span></div></fieldset>
      </div>
    </div>
  </form>

  <div class="strip bottom">
    <button aria-label="Layers"><svg viewBox="0 0 24 24"><use href="#layers" width="24" height="24"/></svg></button>
    <button aria-label="Color"><svg viewBox="0 0 36 36"><circle cx="20" cy="18" r="15" fill="url(#g-aqua)"/><use href="#palette" x="1" y="18" width="17" height="17"/></svg></button>
    <button aria-label="Pen"><svg viewBox="0 0 36 36"><path d="M5 28h29" stroke="#111" stroke-width="2"/><path d="M5 28l10-17L26 4q2 8 8 9l-12 11z" fill="#d5d0d0" stroke="#444"/><path d="M5 28l22-18" stroke="#666"/><circle cx="16" cy="19" r="1.500"/></svg></button>
    <button aria-label="Paint"><svg viewBox="0 0 36 36"><path d="M4 28h29" stroke="#111" stroke-width="2"/><path d="M17 19L29 8" stroke="#1f6ea3" stroke-width="6" stroke-linecap="round"/><path d="M10 15l9 6-1 9-12-1z" fill="#8f4d18"/><path d="M12 14l8 8" stroke="#1f6ea3" stroke-width="4"/></svg></button>
    <button aria-label="Snap"><svg viewBox="0 0 36 36"><path d="M5 29L32 6" stroke="#1f6496" stroke-width="3"/><path d="M16 10l3 6 6-1-3 5 3 6-6-1-5 4-1-7-5-3 6-2z" fill="#c33" stroke="#8a1a1a"/></svg></button>
    <button class="dim" aria-label="Zero"><svg viewBox="0 0 36 36"><path d="M8 18v13l16-6M8 31l-6-4" fill="none" stroke="#999"/><text x="9" y="24" class="ico-t ico-gray" font-size="23">00</text></svg></button>
    <button aria-label="Path"><svg viewBox="0 0 36 36"><circle cx="9" cy="6" r="5" fill="url(#g-red)"/><path d="M12 10l6 9v16M18 19L3 24v11" fill="none" stroke="#222" stroke-width="1.500"/><path d="M22 33l12-4-3 6z"/></svg></button>
    <button aria-label="Copy attributes"><svg viewBox="0 0 24 24"><use href="#brush" width="24" height="24"/></svg></button>
    <button aria-label="Copy from entity"><svg viewBox="0 0 24 24"><use href="#eye" width="24" height="24"/><use href="#brush" x="8" y="8" width="16" height="16"/></svg></button>
    <button aria-label="Properties"><svg viewBox="0 0 24 24"><use href="#pencil" width="24" height="24"/></svg></button>
    <button aria-label="Mesh"><svg viewBox="0 0 36 36"><path d="M10 5l18 1 6 12-5 12-17 2L3 20zM3 20h30M10 5l9 13 9-12M19 18l-7 14M19 18l10 12M10 5l-1 14 3 13M28 6v12l1 12" fill="none" stroke="#333"/></svg></button>
  </div>
</section>

<aside class="vis">
  <div class="dock-title"><h2>Visibility</h2><button aria-label="Float"><svg><use href="#float"/></svg></button><button aria-label="Close"><svg><use href="#close"/></svg></button></div>
  <div class="vis-body">
    <div class="pane p-types">
      <table>
        <colgroup><col><col class="w-104"></colgroup>
        <thead><tr><th>Types</th><th>Entities</th></tr></thead>
        <tbody>
          <tr><td><div class="n root"><svg class="tr"><use href="#t-root"/></svg><svg class="bl"><use href="#bulb"/></svg>Entities</div></td><td></td></tr>
          <tr><td><div class="n"><svg class="tc"><use href="#t-mid"/></svg><svg class="bl"><use href="#bulb"/></svg>Point</div></td><td></td></tr>
          <tr><td><div class="n"><svg class="tc"><use href="#t-plus"/></svg><svg class="bl"><use href="#bulb"/></svg>Curve</div></td><td></td></tr>
          <tr><td><div class="n"><svg class="tc"><use href="#t-plus"/></svg><svg class="bl"><use href="#bulb"/></svg>Face</div></td><td>88</td></tr>
          <tr><td><div class="n"><svg class="tc"><use href="#t-plus"/></svg><svg class="bl"><use href="#bulb"/></svg>Feature<svg class="cr"><use href="#crate"/></svg></div></td><td></td></tr>
          <tr><td><div class="n"><svg class="tc"><use href="#t-mid"/></svg><svg class="bl"><use href="#bulb"/></svg>Solid<svg class="cr"><use href="#crate"/></svg></div></td><td></td></tr>
          <tr><td><div class="n"><svg class="tc"><use href="#t-mid"/></svg><svg class="bl"><use href="#bulb"/></svg>Mesh</div></td><td></td></tr>
          <tr><td><div class="n"><svg class="tc"><use href="#t-mid"/></svg><svg class="bl"><use href="#bulb"/></svg>Polyline</div></td><td></td></tr>
          <tr><td><div class="n"><svg class="tc"><use href="#t-mid"/></svg><svg class="bl"><use href="#bulb"/></svg>Point cloud</div></td><td></td></tr>
          <tr><td><div class="n"><svg class="tc"><use href="#t-plus"/></svg><svg class="bl"><use href="#bulb"/></svg>Note</div></td><td></td></tr>
          <tr><td><div class="n"><svg class="tc"><use href="#t-plus"/></svg><svg class="bl"><use href="#bulb"/></svg>Dimension</div></td><td></td></tr>
          <tr><td><div class="n"><svg class="tc"><use href="#t-mid"/></svg><svg class="bl"><use href="#bulb"/></svg>Vector graphic</div></td><td></td></tr>
          <tr><td><div class="n"><svg class="tc"><use href="#t-mid"/></svg><svg class="bl"><use href="#bulb"/></svg>Image</div></td><td></td></tr>
          <tr><td><div class="n"><svg class="tc"><use href="#t-mid"/></svg><svg class="bl"><use href="#bulb"/></svg>Group<svg class="cr"><use href="#crate"/></svg></div></td><td></td></tr>
          <tr><td><div class="n"><svg class="tc"><use href="#t-end"/></svg><svg class="bl"><use href="#bulb"/></svg>V-sketch<svg class="cr"><use href="#crate"/></svg></div></td><td></td></tr>
        </tbody>
      </table>
    </div>
    <div class="combo search"><select aria-label="Search"><option>Search</option></select><svg><use href="#arr-d"/></svg></div>
    <div class="pane p-layer">
      <table>
        <colgroup><col><col class="w-120"><col class="w-48"></colgroup>
        <thead><tr><th>Names<svg class="sort"><use href="#arr-d"/></svg></th><th>Entities</th><th>Description</th></tr></thead>
        <tbody>
          <tr><td><div class="n root"><svg class="tr"><use href="#t-root"/></svg><svg class="bl cur"><use href="#bulb"/></svg>Layer<svg class="pk"><use href="#picker"/></svg></div></td><td></td><td></td></tr>
          <tr><td><div class="n"><svg class="tc"><use href="#t-mid"/></svg><svg class="bl"><use href="#bulb"/></svg><b>Default</b></div></td><td></td><td class="near">Default</td></tr>
          <tr><td><div class="n"><svg class="tc"><use href="#t-end"/></svg><svg class="bl"><use href="#bulb"/></svg>0</div></td><td>88</td><td></td></tr>
        </tbody>
      </table>
    </div>
    <div class="pane p-color">
      <table>
        <colgroup><col><col class="w-168"></colgroup>
        <thead><tr><th>Names<svg class="sort"><use href="#arr-u"/></svg></th><th>Entities</th></tr></thead>
        <tbody>
          <tr><td><div class="n root"><svg class="tr"><use href="#t-root"/></svg><svg class="bl"><use href="#bulb"/></svg>Color<svg class="pk"><use href="#picker"/></svg></div></td><td></td></tr>
          <tr><td><div class="n"><svg class="tc"><use href="#t-mid"/></svg><svg class="bl"><use href="#bulb"/></svg><i class="sw" style="--c:#0cc"></i><b>01 Aqua</b></div></td><td></td></tr>
          <tr><td><div class="n"><svg class="tc"><use href="#t-mid"/></svg><svg class="bl"><use href="#bulb"/></svg><i class="sw" style="--c:#0aa"></i>02 Turquoise</div></td><td></td></tr>
          <tr><td><div class="n"><svg class="tc"><use href="#t-mid"/></svg><svg class="bl"><use href="#bulb"/></svg><i class="sw" style="--c:#3f5f80"></i>03 Teal</div></td><td></td></tr>
          <tr><td><div class="n"><svg class="tc"><use href="#t-mid"/></svg><svg class="bl"><use href="#bulb"/></svg><i class="sw" style="--c:#0000d0"></i>04 Blue</div></td><td></td></tr>
          <tr><td><div class="n"><svg class="tc"><use href="#t-mid"/></svg><svg class="bl"><use href="#bulb"/></svg><i class="sw" style="--c:#000066"></i>05 Navy</div></td><td></td></tr>
          <tr><td><div class="n"><svg class="tc"><use href="#t-mid"/></svg><svg class="bl"><use href="#bulb"/></svg><i class="sw" style="--c:#cc0"></i>06 Yellow</div></td><td></td></tr>
          <tr><td><div class="n"><svg class="tc"><use href="#t-mid"/></svg><svg class="bl"><use href="#bulb"/></svg><i class="sw" style="--c:#660"></i>07 Olive</div></td><td></td></tr>
          <tr><td><div class="n"><svg class="tc"><use href="#t-mid"/></svg><svg class="bl"><use href="#bulb"/></svg><i class="sw" style="--c:#b06a15"></i>08 Orange</div></td><td></td></tr>
          <tr><td><div class="n"><svg class="tc"><use href="#t-mid"/></svg><svg class="bl"><use href="#bulb"/></svg><i class="sw" style="--c:#d80000"></i>09 Red</div></td><td></td></tr>
          <tr><td><div class="n"><svg class="tc"><use href="#t-mid"/></svg><svg class="bl"><use href="#bulb"/></svg><i class="sw" style="--c:#600"></i>10 Maroon</div></td><td></td></tr>
          <tr><td><div class="n"><svg class="tc"><use href="#t-mid"/></svg><svg class="bl"><use href="#bulb"/></svg><i class="sw" style="--c:#00cc00"></i>11 Lime</div></td><td></td></tr>
          <tr><td><div class="n"><svg class="tc"><use href="#t-mid"/></svg><svg class="bl"><use href="#bulb"/></svg><i class="sw" style="--c:#007000"></i>12 Green</div></td><td></td></tr>
          <tr><td><div class="n"><svg class="tc"><use href="#t-mid"/></svg><svg class="bl"><use href="#bulb"/></svg><i class="sw" style="--c:#004f20"></i>13 Smaragd</div></td><td></td></tr>
          <tr><td><div class="n"><svg class="tc"><use href="#t-mid"/></svg><svg class="bl"><use href="#bulb"/></svg><i class="sw" style="--c:#c800c8"></i>14 Fuchsia</div></td><td></td></tr>
          <tr><td><div class="n"><svg class="tc"><use href="#t-mid"/></svg><svg class="bl"><use href="#bulb"/></svg><i class="sw" style="--c:#600070"></i>15 Purple</div></td><td></td></tr>
          <tr><td><div class="n"><svg class="tc"><use href="#t-mid"/></svg><svg class="bl"><use href="#bulb"/></svg><i class="sw" style="--c:#888"></i>16 Lavender</div></td><td></td></tr>
        </tbody>
      </table>
      <div class="sbar"><button aria-label="Scroll up"><svg><use href="#arr-u"/></svg></button><div class="thumb"><i></i></div><button class="dn" aria-label="Scroll down"><svg><use href="#arr-d"/></svg></button></div>
    </div>
    <div class="pane row"><div class="n root"><svg class="tr"><use href="#t-root"/></svg><svg class="ic"><use href="#tag"/></svg>Tags</div><button aria-label="Open tags"><svg><use href="#arr-d"/></svg></button></div>
    <div class="pane row"><div class="n root"><svg class="tr"><use href="#t-root"/></svg><svg class="ic"><use href="#user"/></svg>User defined tags</div><button aria-label="Open user tags"><svg><use href="#arr-d"/></svg></button></div>
    <div class="pane row last"><div class="n root"><svg class="tr" viewBox="0 0 20 24"><path d="M6.500 0v6l6 6.500H20" stroke="#222" stroke-dasharray="1 1" fill="none"/></svg><svg class="ic" viewBox="-3 -1 26 26"><use href="#disk" width="21" height="24"/></svg>Stored filters</div></div>
  </div>
</aside>
</main>
</body>
</html>
```
FILE: styles.css
```css
* { box-sizing: border-box; }
body {
  margin: 0;
  height: 100vh;
  display: flex;
  flex-direction: column;
  overflow: hidden;
  background: #fff;
  color: #000;
  font: 17px/24px "Open Sans", "Noto Sans", sans-serif;
}
button, input, select { font: inherit; color: inherit; margin: 0; }
button { padding: 0; border: 0; background: none; }
h1, h2, p { margin: 0; font-size: inherit; font-weight: 400; }
svg { display: block; flex: none; }
.defs { position: absolute; width: 0; height: 0; }
.ico-t { font-family: "Liberation Sans", sans-serif; font-weight: 700; }
.ico-s { font-family: "Liberation Serif", serif; font-weight: 700; font-style: italic; }
.ico-red { fill: #8f1d1d; }
.ico-green { fill: #4a8f1e; }
.ico-gray { fill: #888; }

/* title bar */
.titlebar { height: 34px; display: flex; align-items: center; padding-left: 2px; }
.app-icon { width: 24px; height: 24px; }
.titlebar h1 { flex: 1; margin-left: 5px; font-family: "Noto Sans", "Open Sans", sans-serif; white-space: nowrap; }
.win-buttons { display: flex; }
.win-buttons button { width: 70px; height: 32px; display: grid; place-items: center; }
.win-buttons svg { width: 16px; height: 16px; }

/* menu bar and tool bar */
.bars { background: linear-gradient(#fff, #959595 34px, #959595 38px, #fff 73px); }
.menubar { height: 34px; display: flex; font-weight: 700; }
.menubar > button, .menu-anchor > button { height: 34px; padding: 0 15px 0 14px; }
.menubar > button:first-child { padding: 0 14px 0 17px; }
.menu-anchor { position: relative; z-index: 10; }
.menubar > .recent {
  margin-left: auto; padding: 3px 9px 0 10px;
  color: #00f;
  border: 1px solid #999; border-top: 0; border-right-color: #333; border-bottom: 2px solid #333;
  background: linear-gradient(#fff, #a5a5a5);
}
.toolbar { height: 44px; display: flex; align-items: center; padding: 0 0 0 8px; }
.toolbar .grip { width: 2px; height: 26px; border-left: 2px dotted #eee; }
.tg { display: flex; align-items: center; gap: 7px; }
.tg button, .tg svg { width: 30px; height: 30px; }
.views { flex: none; width: 656px; margin: 0 14px 0 6px; padding: 0 3px 0 4px; gap: 8px; }
.views .push { margin-left: auto; }
.planes { display: grid; grid-template-columns: repeat(18, 1fr); gap: 0; justify-items: center; width: 672px; margin: 0 13px 0 3px; }
.turning { display: grid; grid-template-columns: repeat(4, 1fr); gap: 0; justify-items: center; width: 150px; margin-left: 6px; }
.tg .bar { width: 6px; height: 28px; border: 1px solid #999; border-radius: 3px; background: #fff; }

/* drop-down menu */
.menu {
  position: absolute; top: 32px; left: 2px; width: 435px; padding: 5px 6px 5px 5px;
  font-weight: 400;
  background: linear-gradient(#fff, #c8c8c8);
  border-right: 1px solid #888; border-bottom: 1px solid #888;
  box-shadow: 3px 3px 4px rgba(0, 0, 0, .5);
}
.mi { width: 100%; height: 33px; display: flex; align-items: center; text-align: left; padding-left: 3px; }
.mi > svg { width: 24px; height: 24px; }
.mi span { margin-left: 10px; width: 299px; white-space: nowrap; }
.mi kbd { font: inherit; width: 66px; white-space: nowrap; }
.mi > .more { width: 8px; height: 12px; }
.mi.off { color: #999; }
.mi.hot { background: linear-gradient(#fff, #999); }
.menu hr { height: 2px; border: 0; margin: 7px 0; background: #000; }
.menu hr.thin { height: 1px; margin: 7px 0 8px; }

/* work area */
.work { flex: 1; min-height: 0; display: flex; }
.dock-title { height: 28px; margin-top: 1px; display: flex; align-items: center; gap: 20px; padding: 4px 8px 0 7px; background: #e8e8e8; border: 1px solid #b8b8b8; border-width: 1px 2px 2px; }
.dock-title h2 { flex: 1; }
.dock-title svg { width: 12px; height: 14px; }

/* CAM dock */
.cam { flex: none; width: 572px; padding-right: 7px; display: flex; flex-direction: column; font-family: "Liberation Sans", sans-serif; font-size: 16px; border-right: 1px solid #ccc; background: linear-gradient(#fff, #c4c4c4); }
.cam .dock-title { font-family: "Open Sans", "Noto Sans", sans-serif; }
.cam-body { flex: 1; margin: 9px 5px 4px 5px; display: flex; flex-direction: column; background: #efefef; }
.tab { align-self: flex-start; width: 54px; height: 27px; margin-left: 2px; padding: 2px 0 0 5px; text-align: left; border: 1px solid #d5d5d5; border-bottom: 0; background: #efefef; }
.cam-page { flex: 1; display: flex; flex-direction: column; border: 1px solid #d9d9d9; padding: 4px 3px 7px 5px; }
.cam-page p { height: 24px; }
.list { background: #fff; border: 1px solid #888c96; }
.list.jobs { flex: 567 1 0; }
.list.rest { flex: 649 1 0; }
.cam-row { display: flex; align-items: center; gap: 3px; height: 38px; margin-top: 1px; padding-right: 1px; }
.cam-row input { flex: 1; min-width: 0; height: 32px; border: 2px solid #777; background: #fff; }
.sq { width: 34px; height: 38px; display: grid; place-items: center; background: #ccc; border: 1px solid #bbb; }
.sq svg { width: 24px; height: 24px; }
.sq.end { margin-left: auto; background: #eee; border: 1px solid #aaa; }
.cam-page hr { width: 100%; height: 1px; margin: 3px 0 2px; border: 0; background: #b5c8dc; }

/* 3D view */
.view { flex: 1; min-width: 0; position: relative; display: flex; flex-direction: column; justify-content: space-between; background: linear-gradient(#000, #bbb); }
.model { position: absolute; inset: 0; width: 100%; height: 100%; }
.ln { vector-effect: non-scaling-stroke; }
.strip { position: relative; display: flex; gap: 2px; height: 42px; }
.strip.top { width: 825px; margin-left: 1px; }
.strip.bottom { width: 478px; margin: 0 auto 1px; }
.strip button { flex: 1; display: grid; place-items: center; overflow: hidden; background: linear-gradient(#fff, #c2c2c2); border: 1px solid #aaa; border-top-color: #eee; border-right: 2px solid #333; border-bottom: 2px solid #333; }
.strip button.dim { background: #cbcbcb; border-color: #999; }
.strip button.pp { background: #999; }
.strip svg { width: 36px; height: 36px; overflow: hidden; }

/* dialog */
.dialog { position: absolute; left: 0; top: 83px; width: 548px; background: #00375b; border: 1px solid #333; border-top: 0; box-shadow: 3px 5px 10px rgba(0, 0, 0, .6); color: #444; font-family: "Noto Sans", "Open Sans", sans-serif; font-size: 16px; }
.dlg-title { height: 44px; display: flex; align-items: center; padding: 2px 26px 0 13px; background: #fff; color: #888; }
.dlg-title > svg { width: 20px; height: 20px; }
.dlg-title h2 { flex: 1; margin-left: 6px; }
.dlg-title button { width: 16px; margin-left: 54px; }
.dlg-title button svg { width: 16px; height: 16px; }
.dlg-body { padding: 15px 15px 13px; }
.dlg-head { display: flex; gap: 16px; margin-bottom: 16px; }
.big { width: 71px; height: 71px; display: grid; place-items: center; border: 1px solid #888; border-radius: 8px; overflow: hidden; background: linear-gradient(#9a9a9a, #fff); }
.big svg { width: 60px; height: 60px; margin-top: 12px; }
.big.ok { border-top-color: #222; border-left-color: #222; }
.big.ok svg { width: 70px; height: 70px; margin: 0; }
.apply { flex: 1; height: 71px; display: flex; flex-direction: column; align-items: stretch; border-radius: 8px; border-top: 1px solid #ccc; background: linear-gradient(#959595, #fff); color: #777; text-align: center; }
.apply span { height: 31px; line-height: 30px; }
.apply div { display: grid; grid-template-columns: repeat(4, 1fr); }
.apply button { display: grid; place-items: center; height: 38px; }
.apply svg { width: 36px; height: 36px; }
.apply svg.sm { width: 24px; height: 24px; }
.apply svg.wide { width: 42px; }
.dlg-panel { height: 485px; padding: 34px 16px 0; border: 1px solid #888; border-radius: 8px; background: linear-gradient(#999, #fff); }
fieldset { margin: 0 0 33px; padding: 0 14px; border: 1px solid #888; border-radius: 9px; min-width: 0; }
legend { display: flex; align-items: flex-end; height: 2px; margin: 0 0 0 1px; padding: 0 10px 0 15px; }
legend span { flex: none; height: 20px; line-height: 18px; }
.fs { display: flex; align-items: flex-end; height: 66px; gap: 16px; }
.f-select { height: 72px; }
.pick { width: 102px; height: 57px; padding-top: 2px; color: #00f; border: 1px solid #333; border-radius: 4px; background: linear-gradient(#fff, #999); }
.f-select input { width: 101px; height: 27px; padding: 4px 4px 2px; border: 1px solid #777; border-radius: 3px; background: #dfdfdf; color: #555; }
.f-level { height: 135px; margin-bottom: 25px; padding-top: 10px; color: #000; }
.f-level legend { color: #444; }
.f-level label { position: relative; height: 39px; display: flex; align-items: center; font-size: 15px; }
.f-level input { appearance: none; width: 20px; height: 21px; margin-right: 9px; border: 1px solid #333; border-right-color: #999; border-bottom-color: #999; border-radius: 4px; background: #fff; }
.f-level input:checked { background: linear-gradient(#fff, #bbb); border-color: #999; }
.tick { position: absolute; left: 0; top: 8px; width: 20px; height: 20px; }
.f-comment { height: 71px; margin-bottom: 30px; }
.f-comment input { width: 100%; height: 30px; border: 1px solid #777; border-radius: 4px; background: #fdfdfd; }
.f-lock { height: 71px; margin-bottom: 0; }
.f-lock .fs { height: 64px; justify-content: space-between; }
.f-lock label { margin-bottom: 18px; }
.combo { position: relative; display: flex; }
.combo select { appearance: none; flex: 1; border: 1px solid #aaa; border-right: 1px solid #333; border-bottom: 2px solid #333; border-radius: 0; background: linear-gradient(#fff, #999); padding: 0 10px; }
.combo > svg { position: absolute; right: 11px; top: 11px; width: 12px; height: 8px; pointer-events: none; }
.combo::after { content: ""; position: absolute; right: 32px; top: 0; bottom: 2px; border-left: 1px solid #888; }
.f-lock .combo { width: 300px; height: 30px; }
.f-lock .combo::before { content: ""; position: absolute; left: 4px; top: 6px; height: 18px; border-left: 2px solid #222; }

/* visibility dock */
.vis { flex: none; width: 435px; padding-left: 5px; border-right: 2px solid #222; display: flex; flex-direction: column; background: #fff; }
.vis-body { flex: 1; min-height: 0; margin-top: 4px; display: flex; flex-direction: column; gap: 5px; background: #00375b; }
.pane { display: flex; min-height: 0; overflow: hidden; border: 1px solid #aaa; border-bottom-color: #333; border-radius: 4px; background: linear-gradient(135deg, #fff, #c9c9c9); }
.p-types { flex: 432 1 0; }
.p-layer { flex: 401 1 0; margin-top: -4px; }
.p-color { flex: 433 1 0; margin-top: -1px; }
.search { height: 29px; }
.search select { padding: 2px 9px 0; background: linear-gradient(#fff, #999) 7px 5px / calc(100% - 46px) 18px no-repeat, linear-gradient(#eee, #999); }
table { flex: 1; width: 0; align-self: flex-start; table-layout: fixed; border-collapse: collapse; }
.w-104 { width: 104px; } .w-120 { width: 120px; } .w-48 { width: 48px; } .w-168 { width: 168px; }
th { height: 40px; padding: 0 0 0 8px; text-align: left; font-weight: 400; white-space: nowrap; overflow: hidden; background: linear-gradient(#fff, #999); position: relative; }
th + th { border-left: 1px solid #888; }
.sort { position: absolute; right: 12px; top: 17px; width: 12px; height: 8px; }
td { height: 24px; padding: 0 0 0 11px; white-space: nowrap; }
td.near { padding-left: 6px; }
td:first-child { padding: 0; }
.p-types tbody tr:first-child td { height: 25px; }
.n { display: flex; align-items: center; height: 24px; padding-left: 37px; white-space: nowrap; }
.n.root { padding-left: 10px; }
.tr { width: 20px; height: 24px; margin-right: 3px; }
.tc { width: 26px; height: 24px; }
.bl { width: 20px; height: 24px; margin-right: 9px; }
.cur { box-shadow: inset 0 0 0 2px #85652d; background: #fff; }
.cr { width: 24px; height: 24px; margin-left: 12px; }
.pk { width: 20px; height: 24px; margin-left: 16px; }
.sw { width: 24px; height: 24px; margin: 0 7px 0 -2px; background: radial-gradient(circle at 4px 4px, #fff 1px, transparent 6px) 0 8px / 16px 16px no-repeat, linear-gradient(var(--c), var(--c)) 0 8px / 16px 16px no-repeat, #fff; }
.sbar { width: 20px; display: flex; flex-direction: column; border-left: 1px solid #888; background: #fff; }
.sbar button { height: 22px; display: grid; place-items: center; border-bottom: 1px solid #999; background: linear-gradient(#fff, #ddd); }
.sbar .dn { margin-top: auto; background: #ccc; }
.sbar svg, .row button svg { width: 12px; height: 8px; }
.thumb { flex: 0 0 281px; display: grid; place-items: center; background: linear-gradient(#fff, #ccc); border-bottom: 1px solid #888; }
.thumb i { width: 14px; height: 10px; border: 1px solid #888; border-width: 1px 0; background: linear-gradient(#888, #888) 0 4px / 100% 1px no-repeat; }
.row { height: 25px; justify-content: space-between; background: linear-gradient(160deg, #fff, #ccc); }
.row.last { margin-bottom: 1px; }
.row .ic { width: 24px; height: 24px; margin: 0 7px 0 -2px; }
.row button { width: 20px; display: grid; place-items: center; background: #ccc; border-left: 1px solid #888; }
```
